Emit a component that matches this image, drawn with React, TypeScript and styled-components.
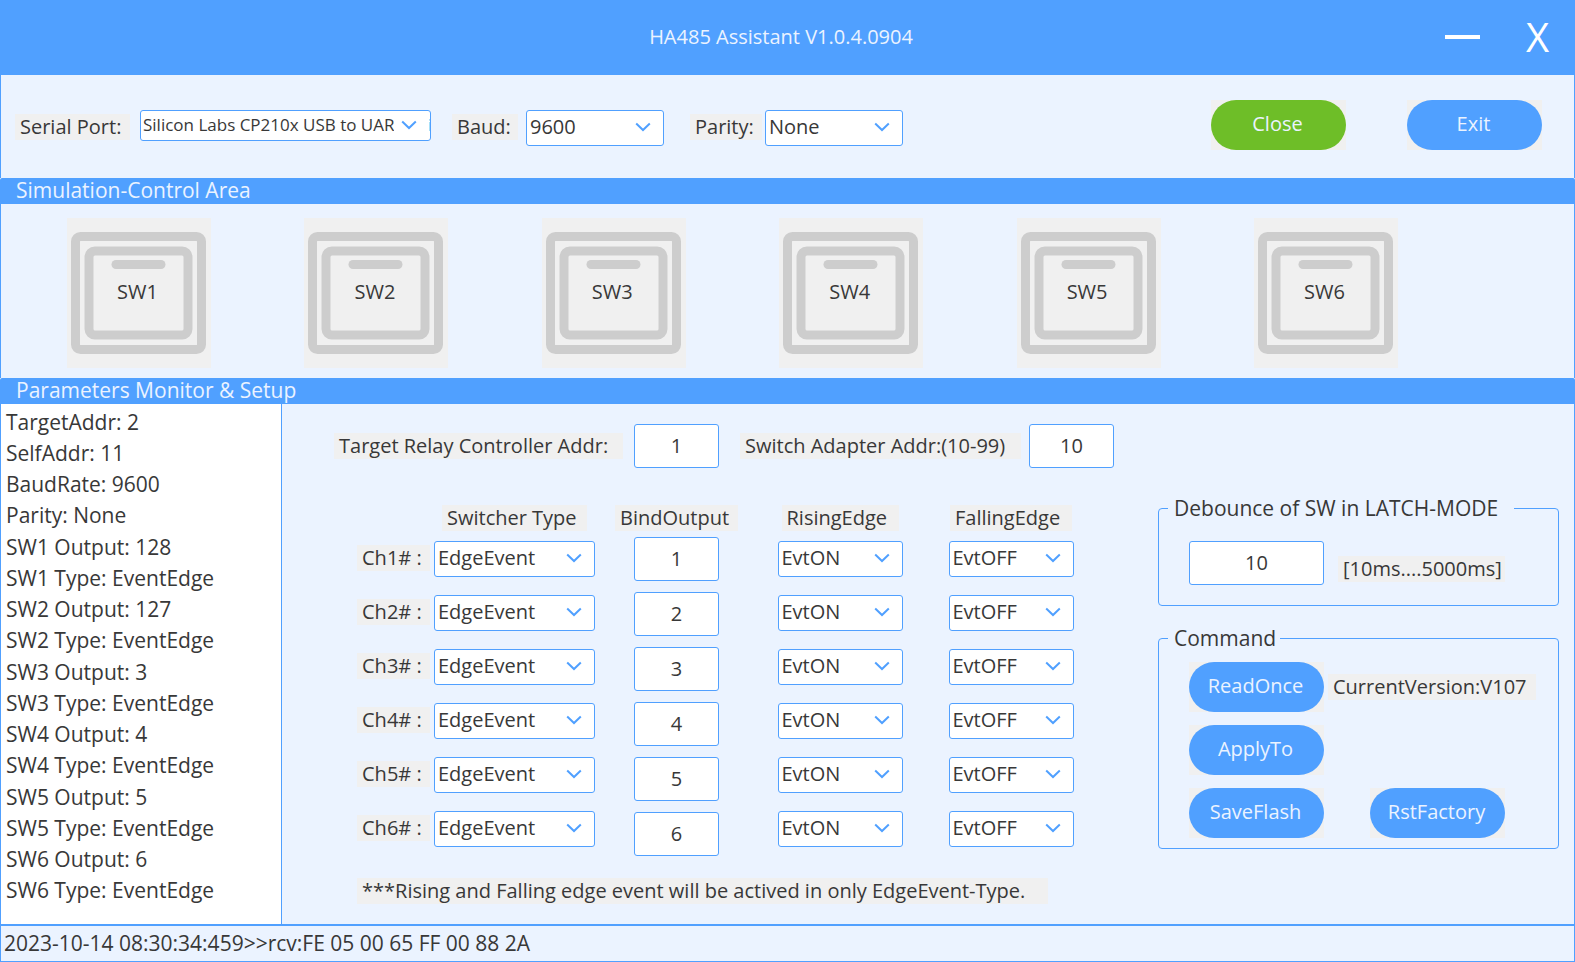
import React from 'react';
import styled, { createGlobalStyle } from 'styled-components';

const blue = '#50a0ff';
const panel = '#ebf3ff';
const plate = '#f0f0f0';
const ink = '#383838';

const GlobalStyle = createGlobalStyle`
  *, *::before, *::after { box-sizing: border-box; }
  body { margin: 0; background: #fff; }
  body, button, input, select {
    font-family: "Open Sans", "Noto Sans", sans-serif;
    font-size: 20px;
    line-height: 26px;
    color: ${ink};
  }
`;

const Window = styled.div`
  display: flex;
  flex-direction: column;
  min-height: 100vh;
  min-width: 1500px;
`;

const TitleBar = styled.header`
  display: grid;
  grid-template-columns: 1fr auto 1fr;
  align-items: center;
  height: 75px;
  padding: 0 26px 2px 13px;
  background: ${blue};
`;

const Title = styled.h1`
  grid-column: 2;
  margin: 0;
  font-size: 20px;
  font-weight: 400;
  color: ${panel};
`;

const WindowButtons = styled.div`
  display: flex;
  justify-content: flex-end;
  align-items: center;
  gap: 46px;
`;

const WindowButton = styled.button`
  display: flex;
  align-items: center;
  height: 40px;
  padding: 0;
  border: 0;
  background: none;
  font-size: 40px;
  line-height: 40px;
  color: #fff;
`;

const MinimizeMark = styled.span`
  width: 35px;
  height: 4px;
  background: #fff;
`;

const Panel = styled.section`
  border: solid ${blue};
  border-width: 0 1px;
  background: ${panel};
`;

const Toolbar = styled(Panel)`
  display: flex;
  align-items: flex-start;
  height: 103px;
  padding: 25px 32px 0 14px;
`;

const PortFields = styled.div`
  display: flex;
  align-items: flex-start;
  flex: 1;
  padding-top: 10px;
`;

const Field = styled.div<{ $gap: number; $after?: number }>`
  display: flex;
  align-items: center;
  gap: ${(p) => p.$gap}px;
  margin-right: ${(p) => p.$after ?? 21}px;
`;

const ToolField = styled(Field)`
  align-items: flex-start;

  > label {
    margin-top: 4px;
  }
`;

const ToolbarButtons = styled.div`
  display: flex;
  gap: 61px;
`;

const SectionBar = styled.h2`
  height: 26px;
  margin: 0;
  padding: 0 16px;
  border-radius: 2px 2px 0 0;
  background: ${blue};
  font-size: 21px;
  font-weight: 400;
  line-height: 24px;
  color: ${panel};
`;

const tag = `
  display: block;
  height: 26px;
  padding: 0 5px;
  background: ${plate};
  white-space: nowrap;
`;

const Tag = styled.label<{ $width: number }>`
  ${tag}
  width: ${(p) => p.$width}px;
`;

const TextTag = styled.span<{ $width: number }>`
  ${tag}
  width: ${(p) => p.$width}px;
`;

const Plate = styled.span`
  display: block;
  width: 135px;
  background: ${plate};
`;

const PillButton = styled.button<{ $color?: string }>`
  display: block;
  width: 100%;
  height: 50px;
  padding: 0 2px 2px 0;
  border: 0;
  border-radius: 25px;
  background: ${(p) => p.$color ?? blue};
  color: ${panel};
`;

function Pill({ children, color }: { children: string; color?: string }) {
  return (
    <Plate>
      <PillButton type="button" $color={color}>{children}</PillButton>
    </Plate>
  );
}

const SelectBox = styled.div<{ $width: number }>`
  position: relative;
  width: ${(p) => p.$width}px;
`;

const SelectControl = styled.select<{ $compact?: boolean }>`
  display: block;
  width: 100%;
  height: ${(p) => (p.$compact ? 31 : 36)}px;
  padding: 0 0 ${(p) => (p.$compact ? 2 : 3)}px ${(p) => (p.$compact ? 2 : 3)}px;
  border: 1px solid ${blue};
  border-radius: 3px;
  appearance: none;
  background: #fff;
  font-size: ${(p) => (p.$compact ? 17 : 20)}px;
`;

const Arrow = styled.span<{ $compact?: boolean }>`
  position: absolute;
  top: 2px;
  bottom: 4px;
  right: 2px;
  display: flex;
  align-items: center;
  width: ${(p) => (p.$compact ? 35 : 36)}px;
  padding-left: ${(p) => (p.$compact ? 7 : 9)}px;
  background: #fff;
  pointer-events: none;
`;

function Select({ id, label, value, width, compact }: {
  id?: string; label?: string; value: string; width: number; compact?: boolean;
}) {
  return (
    <SelectBox $width={width}>
      <SelectControl id={id} aria-label={label} $compact={compact} defaultValue={value}>
        <option>{value}</option>
      </SelectControl>
      <Arrow $compact={compact}>
        <svg width="16" height="10" viewBox="0 0 16 10" fill="none" stroke={blue} strokeWidth="2">
          <path d="M1.2 1.5 8 8 14.8 1.5" />
        </svg>
      </Arrow>
    </SelectBox>
  );
}

const NumberBox = styled.input<{ $width: number }>`
  display: block;
  width: ${(p) => p.$width}px;
  height: 44px;
  padding: 0 0 2px;
  border: 1px solid ${blue};
  border-radius: 3px;
  background: #fff;
  text-align: center;
`;

const SwitchRow = styled(Panel)`
  display: flex;
  justify-content: space-between;
  height: 174px;
  padding: 14px 176px 0 66px;
`;

const SwitchTile = styled.button`
  position: relative;
  width: 144px;
  height: 150px;
  padding: 0;
  border: 0;
  background: ${plate};
`;

const SwitchArt = styled.svg`
  display: block;
`;

const SwitchName = styled.span`
  position: absolute;
  inset: 61px 3px auto 0;
  text-align: center;
`;

const Monitor = styled(Panel)`
  display: flex;
  flex: 1;
  border-bottom-width: 1px;
`;

const StatusList = styled.ul`
  display: flex;
  flex-direction: column;
  width: 281px;
  margin: 0;
  padding: 2px 5px 18px;
  border-right: 1px solid ${blue};
  background: #fff;
  font-size: 21px;
  list-style: none;
`;

const StatusItem = styled.li`
  display: flex;
  flex: 1;
  align-items: center;
`;

const Setup = styled.div`
  display: flex;
  flex: 1;
  justify-content: space-between;
  padding: 20px 15px 0 52px;
`;

const AddressRow = styled.div`
  display: flex;
`;

const Channels = styled.div`
  display: grid;
  grid-template-columns: 77px 161px 163px 164px 178px;
  padding: 37px 0 0 23px;
`;

const Column = styled.div<{ $top: number; $gap: number }>`
  display: flex;
  flex-direction: column;
  align-items: center;
  gap: ${(p) => p.$gap}px;
  padding-top: ${(p) => p.$top}px;
`;

const LabelColumn = styled.div`
  display: flex;
  flex-direction: column;
  gap: 28px;
  padding-top: 40px;
`;

const ColumnGroup = styled.div`
  display: flex;
  flex-direction: column;
  align-items: center;
`;

const Note = styled.p`
  ${tag}
  width: 691px;
  margin: 22px 0 0 23px;
`;

const Side = styled.div`
  display: flex;
  flex-direction: column;
  gap: 19px;
  width: 401px;
  padding-top: 71px;
`;

const Group = styled.fieldset<{ $height: number }>`
  height: ${(p) => p.$height}px;
  margin: 0;
  padding: 0 0 0 30px;
  border: 1px solid ${blue};
  border-radius: 4px;
`;

const Legend = styled.legend<{ $width: number }>`
  width: ${(p) => p.$width}px;
  margin-left: -21px;
  padding: 0 6px;
  font-size: 21px;
`;

const DebounceRow = styled.div`
  display: flex;
  gap: 14px;
  padding-top: 20px;
`;

const RangeHint = styled.div`
  padding-top: 15px;
`;

const CommandGrid = styled.div`
  display: grid;
  grid-template-columns: 139px 1fr;
  row-gap: 13px;
  align-items: center;
  padding-top: 11px;
`;

const ResetCell = styled.div`
  padding-left: 42px;
`;

const StatusBar = styled.footer`
  height: 37px;
  padding: 4px 3px 0;
  border: 1px solid ${blue};
  background: ${panel};
  font-size: 21px;
`;

const channels = [1, 2, 3, 4, 5, 6];

const status = [
  'TargetAddr: 2', 'SelfAddr: 11', 'BaudRate: 9600', 'Parity: None',
  'SW1 Output: 128', 'SW1 Type: EventEdge',
  'SW2 Output: 127', 'SW2 Type: EventEdge',
  'SW3 Output: 3', 'SW3 Type: EventEdge',
  'SW4 Output: 4', 'SW4 Type: EventEdge',
  'SW5 Output: 5', 'SW5 Type: EventEdge',
  'SW6 Output: 6', 'SW6 Type: EventEdge',
];

function SelectColumn({ title, titleWidth, value, width }: {
  title: string; titleWidth: number; value: string; width: number;
}) {
  return (
    <ColumnGroup>
      <TextTag $width={titleWidth}>{title}</TextTag>
      <Column $top={10} $gap={18}>
        {channels.map((n) => (
          <Select key={n} label={`Ch${n} ${title}`} value={value} width={width} />
        ))}
      </Column>
    </ColumnGroup>
  );
}

export default function App() {
  return (
    <Window>
      <GlobalStyle />
      <TitleBar>
        <Title>HA485 Assistant V1.0.4.0904</Title>
        <WindowButtons>
          <WindowButton type="button" aria-label="Minimize"><MinimizeMark /></WindowButton>
          <WindowButton type="button">X</WindowButton>
        </WindowButtons>
      </TitleBar>

      <Toolbar>
        <PortFields>
          <ToolField $gap={10}>
            <Tag htmlFor="port" $width={115}>Serial Port:</Tag>
            <Select id="port" value="Silicon Labs CP210x USB to UART Bri" width={291} compact />
          </ToolField>
          <ToolField $gap={8} $after={26}>
            <Tag htmlFor="baud" $width={66}>Baud:</Tag>
            <Select id="baud" value="9600" width={138} />
          </ToolField>
          <ToolField $gap={3}>
            <Tag htmlFor="parity" $width={72}>Parity:</Tag>
            <Select id="parity" value="None" width={138} />
          </ToolField>
        </PortFields>
        <ToolbarButtons>
          <Pill color="#6ebe28">Close</Pill>
          <Pill>Exit</Pill>
        </ToolbarButtons>
      </Toolbar>

      <SectionBar>Simulation-Control Area</SectionBar>
      <SwitchRow>
        {channels.map((n) => (
          <SwitchTile key={n} type="button">
            <SwitchArt width="144" height="150" viewBox="0 0 144 150" fill="none" stroke="#cdcdcd" strokeWidth="9">
              <rect x="8.5" y="18.5" width="126" height="113" rx="5" />
              <rect x="22" y="33" width="99" height="84" rx="6" />
              <path d="M49 46.5H94" strokeLinecap="round" />
            </SwitchArt>
            <SwitchName>SW{n}</SwitchName>
          </SwitchTile>
        ))}
      </SwitchRow>

      <SectionBar>Parameters Monitor &amp; Setup</SectionBar>
      <Monitor>
        <StatusList>
          {status.map((line) => <StatusItem key={line}>{line}</StatusItem>)}
        </StatusList>
        <Setup>
          <div>
            <AddressRow>
              <Field $gap={11}>
                <Tag htmlFor="relay" $width={289}>Target Relay Controller Addr:</Tag>
                <NumberBox id="relay" $width={85} defaultValue="1" />
              </Field>
              <Field $gap={8}>
                <Tag htmlFor="adapter" $width={281}>Switch Adapter Addr:(10-99)</Tag>
                <NumberBox id="adapter" $width={85} defaultValue="10" />
              </Field>
            </AddressRow>
            <Channels>
              <LabelColumn>
                {channels.map((n) => (
                  <Tag key={n} htmlFor={`bind${n}`} $width={73}>Ch{n}# :</Tag>
                ))}
              </LabelColumn>
              <SelectColumn title="Switcher Type" titleWidth={145} value="EdgeEvent" width={161} />
              <ColumnGroup>
                <TextTag $width={123}>BindOutput</TextTag>
                <Column $top={6} $gap={11}>
                  {channels.map((n) => (
                    <NumberBox key={n} id={`bind${n}`} $width={85} defaultValue={n} />
                  ))}
                </Column>
              </ColumnGroup>
              <SelectColumn title="RisingEdge" titleWidth={117} value="EvtON" width={125} />
              <SelectColumn title="FallingEdge" titleWidth={122} value="EvtOFF" width={125} />
            </Channels>
            <Note>***Rising and Falling edge event will be actived in only EdgeEvent-Type.</Note>
          </div>

          <Side>
            <Group $height={111}>
              <Legend $width={346}>Debounce of SW in LATCH-MODE</Legend>
              <DebounceRow>
                <NumberBox aria-label="Debounce" $width={135} defaultValue="10" />
                <RangeHint><TextTag $width={167}>[10ms....5000ms]</TextTag></RangeHint>
              </DebounceRow>
            </Group>
            <Group $height={224}>
              <Legend $width={112}>Command</Legend>
              <CommandGrid>
                <Pill>ReadOnce</Pill>
                <TextTag $width={208}>CurrentVersion:V107</TextTag>
                <Pill>ApplyTo</Pill>
                <span />
                <Pill>SaveFlash</Pill>
                <ResetCell><Pill>RstFactory</Pill></ResetCell>
              </CommandGrid>
            </Group>
          </Side>
        </Setup>
      </Monitor>
      <StatusBar>2023-10-14 08:30:34:459&gt;&gt;rcv:FE 05 00 65 FF 00 88 2A</StatusBar>
    </Window>
  );
}
